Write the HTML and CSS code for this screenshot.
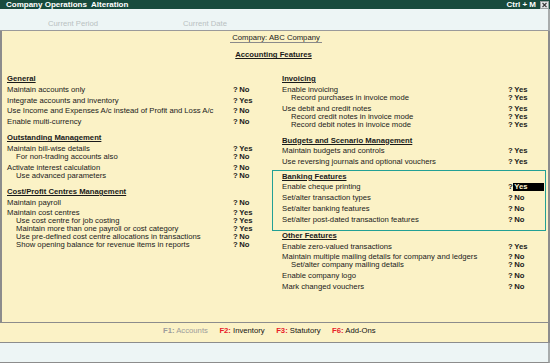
FILE: index.html
```html
<!DOCTYPE html>
<html>
<head>
<meta charset="utf-8">
<link rel="stylesheet" href="styles.css">
</head>
<body>
<div class="window">
  <div class="titlebar">
    <span class="title">Company Operations  Alteration</span>
    <span class="shortcut">Ctrl + M</span>
    <svg class="close" viewBox="0 0 9 8" width="9" height="8">
      <rect x="0.5" y="0.5" width="8" height="7" fill="#e4e8e8" stroke="#9aa0a0"/>
      <path d="M2.5 2 L6.5 6 M6.5 2 L2.5 6" stroke="#3a3a3a" stroke-width="1.1"/>
    </svg>
  </div>
  <div class="infobar">
    <div class="info-col period">Current Period</div>
    <div class="info-col">Current Date</div>
  </div>
  <div class="main">
    <div class="heading"><span class="company">Company: ABC Company</span></div>
    <div class="heading sub"><span class="feat-title">Accounting Features</span></div>
    <div class="columns">
      <div class="col left">
        <div class="sec">
          <div class="hdr"><span>General</span></div>
          <div class="row"><span class="label">Maintain accounts only</span><span class="val"><span class="q">?</span><span class="v">No</span></span></div>
          <div class="row"><span class="label">Integrate accounts and inventory</span><span class="val"><span class="q">?</span><span class="v">Yes</span></span></div>
          <div class="row"><span class="label">Use Income and Expenses A/c instead of Profit and Loss A/c</span><span class="val"><span class="q">?</span><span class="v">No</span></span></div>
          <div class="row"><span class="label">Enable multi-currency</span><span class="val"><span class="q">?</span><span class="v">No</span></span></div>
        </div>
        <div class="sec">
          <div class="hdr"><span>Outstanding Management</span></div>
          <div class="row"><span class="label">Maintain bill-wise details</span><span class="val"><span class="q">?</span><span class="v">Yes</span></span></div>
          <div class="row subrow"><span class="label">For non-trading accounts also</span><span class="val"><span class="q">?</span><span class="v">No</span></span></div>
          <div class="row"><span class="label">Activate interest calculation</span><span class="val"><span class="q">?</span><span class="v">No</span></span></div>
          <div class="row subrow"><span class="label">Use advanced parameters</span><span class="val"><span class="q">?</span><span class="v">No</span></span></div>
        </div>
        <div class="sec">
          <div class="hdr"><span>Cost/Profit Centres Management</span></div>
          <div class="row"><span class="label">Maintain payroll</span><span class="val"><span class="q">?</span><span class="v">No</span></span></div>
          <div class="row"><span class="label">Maintain cost centres</span><span class="val"><span class="q">?</span><span class="v">Yes</span></span></div>
          <div class="row subrow"><span class="label">Use cost centre for job costing</span><span class="val"><span class="q">?</span><span class="v">Yes</span></span></div>
          <div class="row subrow"><span class="label">Maintain more than one payroll or cost category</span><span class="val"><span class="q">?</span><span class="v">Yes</span></span></div>
          <div class="row subrow"><span class="label">Use pre-defined cost centre allocations in transactions</span><span class="val"><span class="q">?</span><span class="v">No</span></span></div>
          <div class="row subrow"><span class="label">Show opening balance for revenue items in reports</span><span class="val"><span class="q">?</span><span class="v">No</span></span></div>
        </div>
      </div>
      <div class="col right">
        <div class="sec">
          <div class="hdr"><span>Invoicing</span></div>
          <div class="row"><span class="label">Enable invoicing</span><span class="val"><span class="q">?</span><span class="v">Yes</span></span></div>
          <div class="row subrow"><span class="label">Record purchases in invoice mode</span><span class="val"><span class="q">?</span><span class="v">Yes</span></span></div>
          <div class="row"><span class="label">Use debit and credit notes</span><span class="val"><span class="q">?</span><span class="v">Yes</span></span></div>
          <div class="row subrow"><span class="label">Record credit notes in invoice mode</span><span class="val"><span class="q">?</span><span class="v">Yes</span></span></div>
          <div class="row subrow"><span class="label">Record debit notes in invoice mode</span><span class="val"><span class="q">?</span><span class="v">Yes</span></span></div>
        </div>
        <div class="sec">
          <div class="hdr"><span>Budgets and Scenario Management</span></div>
          <div class="row"><span class="label">Maintain budgets and controls</span><span class="val"><span class="q">?</span><span class="v">Yes</span></span></div>
          <div class="row"><span class="label">Use reversing journals and optional vouchers</span><span class="val"><span class="q">?</span><span class="v">Yes</span></span></div>
        </div>
        <div class="sec box">
          <div class="hdr"><span>Banking Features</span></div>
          <div class="row"><span class="label">Enable cheque printing</span><span class="val"><span class="q">?</span><span class="v sel">Yes</span></span></div>
          <div class="row"><span class="label">Set/alter transaction types</span><span class="val"><span class="q">?</span><span class="v">No</span></span></div>
          <div class="row"><span class="label">Set/alter banking features</span><span class="val"><span class="q">?</span><span class="v">No</span></span></div>
          <div class="row"><span class="label">Set/alter post-dated transaction features</span><span class="val"><span class="q">?</span><span class="v">No</span></span></div>
        </div>
        <div class="sec">
          <div class="hdr"><span>Other Features</span></div>
          <div class="row"><span class="label">Enable zero-valued transactions</span><span class="val"><span class="q">?</span><span class="v">Yes</span></span></div>
          <div class="row"><span class="label">Maintain multiple mailing details for company and ledgers</span><span class="val"><span class="q">?</span><span class="v">No</span></span></div>
          <div class="row subrow"><span class="label">Set/alter company mailing details</span><span class="val"><span class="q">?</span><span class="v">No</span></span></div>
          <div class="row"><span class="label">Enable company logo</span><span class="val"><span class="q">?</span><span class="v">No</span></span></div>
          <div class="row"><span class="label">Mark changed vouchers</span><span class="val"><span class="q">?</span><span class="v">No</span></span></div>
        </div>
      </div>
    </div>
  </div>
  <div class="footer">
    <span class="fkey disabled"><b>F1:</b> Accounts</span>
    <span class="fkey"><b>F2:</b> Inventory</span>
    <span class="fkey"><b>F3:</b> Statutory</span>
    <span class="fkey"><b>F6:</b> Add-Ons</span>
  </div>
  <div class="bottombar"></div>
</div>
</body>
</html>
```

FILE: styles.css
```css
* { box-sizing: border-box; margin: 0; padding: 0; }
html, body { width: 550px; height: 363px; overflow: hidden; }
body {
  font-family: "Liberation Sans", Arial, sans-serif;
  font-size: 7.7px;
  color: #1a1a1a;
  background: #fbf2c6;
}
.window { display: flex; flex-direction: column; height: 363px; }

.titlebar {
  height: 9px;
  background: #184b3d;
  color: #fff;
  font-weight: bold;
  font-size: 8px;
  line-height: 9px;
  display: flex;
  align-items: center;
  padding: 0 1px 0 6px;
}
.title { flex: 1; white-space: pre; }
.shortcut { margin-right: 4px; }
.close { display: block; }

.infobar {
  height: 22px;
  background: #edf5f5;
  border-bottom: 1px solid #9a9a9a;
  border-right: 2px solid #a8acac;
  display: flex;
  padding: 10.5px 0 0 48px;
  color: #b9c1c1;
  line-height: 8px;
}
.info-col.period { width: 135px; }

.main {
  height: 292px;
  border-left: 2px solid #8c8c8c;
  border-right: 2px solid #8c8c8c;
  border-bottom: 1px solid #8c8c8c;
  padding-top: 3.3px;
}
.heading { text-align: center; line-height: 8px; }
.company {
  display: inline-block;
  border-bottom: 1px solid #8a8a8a;
  padding: 0 2px;
  margin-left: 2px;
}
.heading.sub { margin-top: 8px; }
.feat-title { font-weight: bold; text-decoration: underline; margin-right: 3px; }

.columns {
  display: grid;
  grid-template-columns: 270px 276px;
  margin-top: 7.7px;
}
.col.left { padding-left: 5px; }
.col.right .sec { padding-left: 10px; }

.sec { margin-top: 8px; }
.hdr { line-height: 8px; font-weight: bold; }
.hdr span { text-decoration: underline; }
.row {
  display: grid;
  grid-template-columns: 226px auto;
  line-height: 8px;
  margin-top: 2.8px;
  white-space: nowrap;
}
.row.subrow { margin-top: 0; }
.row.subrow .label { padding-left: 9px; }
.val { font-weight: bold; display: flex; }
.v { padding-left: 1.6px; }
.v.sel {
  background: #000;
  color: #fff6d2;
  width: 31px;
}

.col.right .sec.box {
  margin-top: 3.8px;
  margin-right: 2px;
  border: 1px solid #22a095;
  padding: 1.7px 0 6.4px 9px;
}
.col.right .sec.box + .sec { margin-top: 0.5px; }

.footer {
  height: 20px;
  border-bottom: 1px solid #8c8c8c;
  border-right: 2px solid #8c8c8c;
  padding: 4px 0 0 163px;
  line-height: 8px;
  display: flex;
  gap: 11.5px;
}
.fkey { color: #111; }
.fkey b { color: #e8202a; }
.fkey.disabled, .fkey.disabled b { color: #9c9c9c; }

.bottombar {
  height: 20px;
  background: #edf5f5;
  border-bottom: 1px solid #8c8c8c;
  border-right: 2px solid #a8acac;
}
```
